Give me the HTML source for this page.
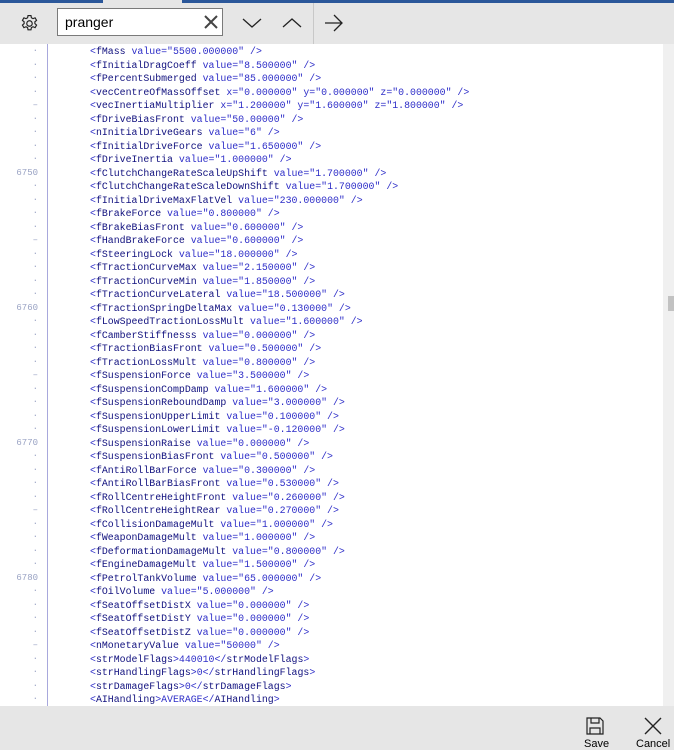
<!DOCTYPE html><html><head><style>
body{margin:0;width:674px;height:750px;overflow:hidden;background:#fff;position:relative;font-family:"Liberation Sans",sans-serif}
.top{position:absolute;left:0;top:0;width:674px;height:3px;background:#2b579a}
.gap{position:absolute;left:103px;top:0;width:79px;height:3px;background:#e6e6e6}
.tb{position:absolute;left:0;top:3px;width:674px;height:41px;background:#e6e6e6}
.search{position:absolute;left:57px;top:8px;width:166px;height:28px;background:#fff;border:1px solid #7a7a7a;box-sizing:border-box;font-size:14px;line-height:26px;padding-left:7px;color:#000}
.sep{position:absolute;left:313px;top:3px;width:1px;height:41px;background:#c8c8c8}
.code{position:absolute;left:0;top:44px;width:662px;height:662px;overflow:hidden}
.ln{position:absolute;left:0;width:38px;text-align:right;font:9px "Liberation Mono",monospace;color:#9aa3c4;height:13.5px;line-height:13.5px}
.gl{position:absolute;left:47px;top:0;width:1px;height:662px;background:#a8a8dc}
.l{position:absolute;left:90px;top:1px;font:9.9px "Liberation Mono",monospace;height:13.5px;line-height:13.5px;white-space:pre;color:#2e2ec8}
.l b{font-weight:normal;color:#10107e}
.sb{position:absolute;left:663px;top:44px;width:11px;height:662px;background:#f0f0f0}
.th{position:absolute;left:668px;top:296px;width:6px;height:15px;background:#c2c2c2}
.bot{position:absolute;left:0;top:706px;width:674px;height:44px;background:#e6e6e6}
.lbl{position:absolute;font-size:11px;color:#000}
</style></head><body>
<div class="top"></div><div class="gap"></div>
<div class="tb"></div>
<svg style="position:absolute;left:20px;top:14px" width="19" height="19" viewBox="0 0 18 18"><g fill="none" stroke="#222" stroke-width="1.1"><circle cx="9" cy="9" r="2.6"/><path d="M7.6 1.5h2.8l.4 2.1 1.5.8 2-.8 1.4 2.4-1.6 1.4v1.7l1.6 1.4-1.4 2.4-2-.8-1.5.8-.4 2.1H7.6l-.4-2.1-1.5-.8-2 .8-1.4-2.4 1.6-1.4V7.4L2.3 6l1.4-2.4 2 .8 1.5-.8z"/></g></svg>
<div class="search">pranger</div>
<svg style="position:absolute;left:203px;top:14px" width="16" height="16"><path d="M2 2L14 14M14 2L2 14" stroke="#444" stroke-width="2"/></svg>
<svg style="position:absolute;left:242px;top:17px" width="20" height="12"><path d="M1 2L10 10L19 2" fill="none" stroke="#222" stroke-width="1.3"/></svg>
<svg style="position:absolute;left:282px;top:17px" width="20" height="12"><path d="M1 10L10 2L19 10" fill="none" stroke="#222" stroke-width="1.3"/></svg>
<div class="sep"></div>
<svg style="position:absolute;left:324px;top:14px" width="20" height="18"><path d="M1 9H18M10 1L18 9L10 17" fill="none" stroke="#222" stroke-width="1.3"/></svg>
<div class="code"><div class="gl"></div>
<div id="c"></div>
</div>
<div class="sb"></div><div class="th"></div>
<div class="bot"></div>
<svg style="position:absolute;left:585px;top:716px" width="20" height="20"><g fill="none" stroke="#222" stroke-width="1.2"><path d="M2 2H15L18 5V18H2Z"/><path d="M6 2V7H14V2"/><path d="M5 18V12H15V18"/></g></svg>
<div class="lbl" style="left:584px;top:738px">Save</div>
<svg style="position:absolute;left:643px;top:716px" width="20" height="20"><path d="M2 2L18 18M18 2L2 18" stroke="#222" stroke-width="1.4"/></svg>
<div class="lbl" style="left:636px;top:738px">Cancel</div>
<script>
var L=[
['fMass',' value="5500.000000" />'],
['fInitialDragCoeff',' value="8.500000" />'],
['fPercentSubmerged',' value="85.000000" />'],
['vecCentreOfMassOffset',' x="0.000000" y="0.000000" z="0.000000" />'],
['vecInertiaMultiplier',' x="1.200000" y="1.600000" z="1.800000" />'],
['fDriveBiasFront',' value="50.00000" />'],
['nInitialDriveGears',' value="6" />'],
['fInitialDriveForce',' value="1.650000" />'],
['fDriveInertia',' value="1.000000" />'],
['fClutchChangeRateScaleUpShift',' value="1.700000" />'],
['fClutchChangeRateScaleDownShift',' value="1.700000" />'],
['fInitialDriveMaxFlatVel',' value="230.000000" />'],
['fBrakeForce',' value="0.800000" />'],
['fBrakeBiasFront',' value="0.600000" />'],
['fHandBrakeForce',' value="0.600000" />'],
['fSteeringLock',' value="18.000000" />'],
['fTractionCurveMax',' value="2.150000" />'],
['fTractionCurveMin',' value="1.850000" />'],
['fTractionCurveLateral',' value="18.500000" />'],
['fTractionSpringDeltaMax',' value="0.130000" />'],
['fLowSpeedTractionLossMult',' value="1.600000" />'],
['fCamberStiffnesss',' value="0.000000" />'],
['fTractionBiasFront',' value="0.500000" />'],
['fTractionLossMult',' value="0.800000" />'],
['fSuspensionForce',' value="3.500000" />'],
['fSuspensionCompDamp',' value="1.600000" />'],
['fSuspensionReboundDamp',' value="3.000000" />'],
['fSuspensionUpperLimit',' value="0.100000" />'],
['fSuspensionLowerLimit',' value="-0.120000" />'],
['fSuspensionRaise',' value="0.000000" />'],
['fSuspensionBiasFront',' value="0.500000" />'],
['fAntiRollBarForce',' value="0.300000" />'],
['fAntiRollBarBiasFront',' value="0.530000" />'],
['fRollCentreHeightFront',' value="0.260000" />'],
['fRollCentreHeightRear',' value="0.270000" />'],
['fCollisionDamageMult',' value="1.000000" />'],
['fWeaponDamageMult',' value="1.000000" />'],
['fDeformationDamageMult',' value="0.800000" />'],
['fEngineDamageMult',' value="1.500000" />'],
['fPetrolTankVolume',' value="65.000000" />'],
['fOilVolume',' value="5.000000" />'],
['fSeatOffsetDistX',' value="0.000000" />'],
['fSeatOffsetDistY',' value="0.000000" />'],
['fSeatOffsetDistZ',' value="0.000000" />'],
['nMonetaryValue',' value="50000" />'],
['strModelFlags','>440010</','strModelFlags'],
['strHandlingFlags','>0</','strHandlingFlags'],
['strDamageFlags','>0</','strDamageFlags'],
['AIHandling','>AVERAGE</','AIHandling']];
var h='';
for(var i=0;i<L.length;i++){var y=i*13.5;var n=(i==9?'6750':i==19?'6760':i==29?'6770':i==39?'6780':(i%5==4?'–':'·'));
h+='<div class="ln" style="top:'+(y+1)+'px">'+n+'</div>';
var s='&lt;<b>'+L[i][0]+'</b>'+L[i][1].replace(/</g,'&lt;').replace(/>/g,'&gt;');
if(L[i][2])s+='<b>'+L[i][2]+'</b>&gt;';
h+='<div class="l" style="top:'+(y+1)+'px">'+s+'</div>';}
document.getElementById('c').innerHTML=h;
</script>
</body></html>
